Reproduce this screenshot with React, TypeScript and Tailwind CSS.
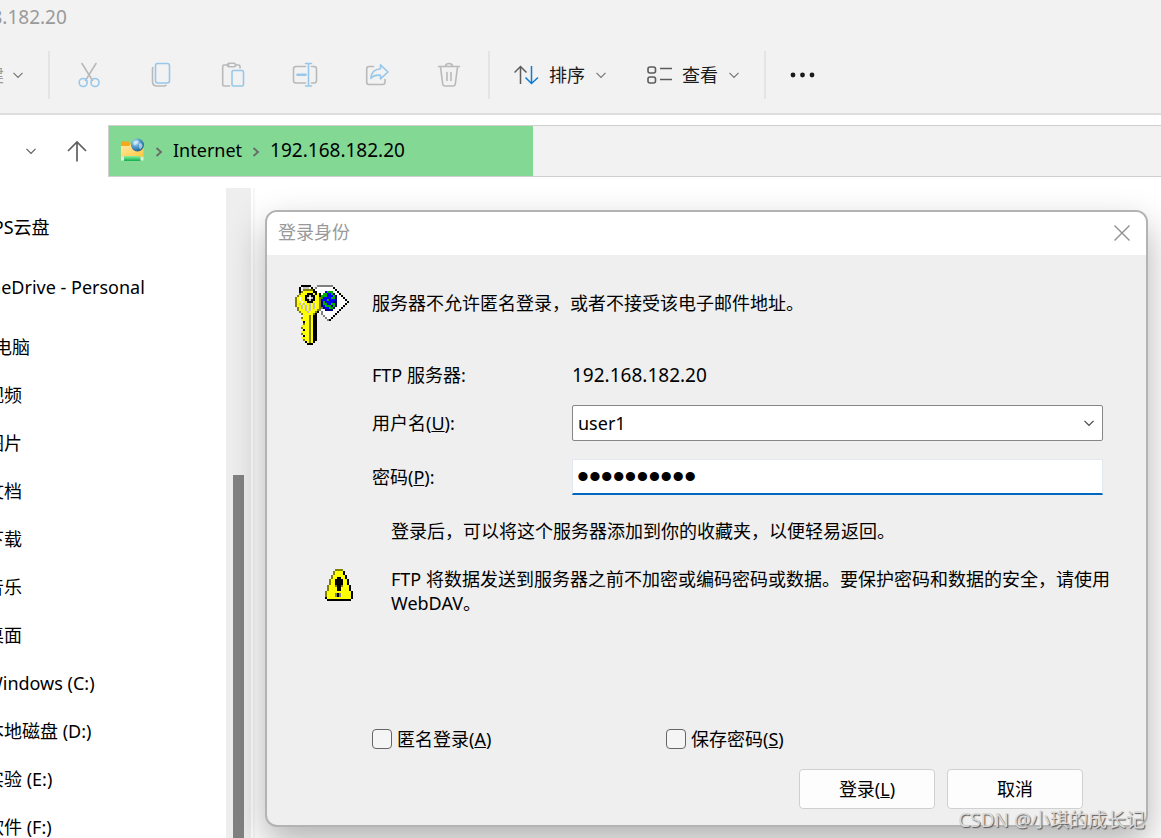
import { useState, type ReactNode } from "react";

const KEY_ROWS = [
  "...KKKKK...GGGGGGGG........",
  "..KWSSSWK.GWWWWWWWWK.......",
  "..K.OOOOOKWWWWWWWWWWK......",
  "..KOYYYYYKKWWWWBgggWWK.....",
  "..OYYYKKKYKYKWggBBgNWWK....",
  ".OYYYKKSKKYYKgggBBBgNWWK...",
  "OYWYYKSWSKYYOgBBBBggNWWWK..",
  "OYWYYKKSKKYYOBBBgBBBNWWWWK.",
  "OYYWYYKKKYYYONgBBBBNNWWWWWK",
  "OYSYSYYSYSYYONggBBggNWWWWK.",
  "OYYSYSYSYSYYONBgggNgNWWWK..",
  ".OYSYSYSYSYYOGNBBggNWWWK...",
  ".OYYYSYSYYYOGWWNNNNWWWK....",
  "..OYYYSYYYOKWGWWWWWWWK.....",
  "...OYYYYYOK..GWWWWWWK......",
  "....YYYOYKK...GWWWWK.......",
  "...OYYYOYKK....GWWK........",
  "...YYYYOYKK.....GK.........",
  "....KYYOYKK................",
  "....OYYOYKK................",
  "...YYYYOYKK................",
  "...OYYYOYKK................",
  "....KYYOYKK................",
  "...YYYYOYKK................",
  "...OYYYOYKK................",
  "....KYYOYKK................",
  "...YYYYOYKK................",
  "....OYYOYKK................",
  ".....KYOYK.................",
  "......KKK..................",
];

const WARNING_ROWS = [
  ".....OOOO.....",
  "....OYYYYK....",
  "....OYYYYK....",
  "...OYYYYYYK...",
  "...OYYKKYYK...",
  "..OYYKKKKYYK..",
  "..OYYKKKKYYK..",
  "..OYYKKKKYYK..",
  ".OYYYOKKOYYYK.",
  ".OYYYYKKYYYYK.",
  ".OYYYYKKYYYYK.",
  "OYYYYYYYYYYYYK",
  "OYYYYGKGYYYYYK",
  "OYYYYGKGYYYYYK",
  "KYYYYYYYYYYYYK",
  ".KKKKKKKKKKKK.",
];

const PALETTE: Record<string, string> = {
  K: "#000000",
  W: "#ffffff",
  G: "#808080",
  S: "#c0c0c0",
  Y: "#ffff00",
  O: "#808000",
  B: "#0000ff",
  N: "#000080",
  g: "#00b000",
};

function PixelIcon({ rows, label, className }: { rows: string[]; label: string; className: string }) {
  return (
    <svg
      role="img"
      aria-label={label}
      viewBox={`0 0 ${rows[0].length} ${rows.length}`}
      shapeRendering="crispEdges"
      className={className}
    >
      {rows.flatMap((row, y) =>
        row.split("").map((c, x) =>
          c === "." ? null : <rect key={`${x}-${y}`} x={x} y={y} width="1" height="1" fill={PALETTE[c]} />
        )
      )}
    </svg>
  );
}

const GRAY = "#b9b9b9";
const BLUE = "#97c7ea";

function ToolIcon({ children }: { children: ReactNode }) {
  return (
    <svg viewBox="0 0 28 28" className="size-7" fill="none" strokeWidth="1.6" strokeLinecap="round" strokeLinejoin="round">
      {children}
    </svg>
  );
}

const tools: { name: string; icon: ReactNode }[] = [
  {
    name: "剪切",
    icon: (
      <ToolIcon>
        <path d="M7 2.5 17.5 19.5M21 2.5 10.500 19.500" stroke={GRAY} />
        <circle cx="8.200" cy="21.500" r="4" stroke={BLUE} />
        <circle cx="20" cy="21.500" r="4" stroke={BLUE} />
      </ToolIcon>
    ),
  },
  {
    name: "复制",
    icon: (
      <ToolIcon>
        <path d="M6 6.500Q5.500 7 5.500 8V20.500Q5.500 25 10 25H17Q18.500 25 19 24.300" stroke={GRAY} />
        <rect x="8.500" y="2.500" width="14" height="19.500" rx="2.200" stroke={BLUE} />
      </ToolIcon>
    ),
  },
  {
    name: "粘贴",
    icon: (
      <ToolIcon>
        <path d="M10 4H5Q3.700 4 3.700 5.500V23.500Q3.700 25 5 25H10.500M17 4H19.500Q21 4 21 5.500V7" stroke={GRAY} />
        <rect x="8.500" y="2.300" width="8" height="3.400" rx="1.700" stroke={GRAY} />
        <rect x="13" y="9.500" width="11.500" height="15.500" rx="1.500" stroke={BLUE} />
      </ToolIcon>
    ),
  },
  {
    name: "重命名",
    icon: (
      <ToolIcon>
        <path d="M14.500 5.500H5Q2.500 5.500 2.500 8V19.500Q2.500 22 5 22H14.500M20.500 5.500H23Q25.500 5.500 25.500 8V19.500Q25.500 22 23 22H20.500" stroke={GRAY} />
        <path d="M17.500 2.500V25M14.500 2.500H20.500M14.500 25H20.500" stroke={BLUE} />
        <path d="M6.500 13.700H14.500" stroke={BLUE} strokeWidth="2.600" />
      </ToolIcon>
    ),
  },
  {
    name: "共享",
    icon: (
      <ToolIcon>
        <path d="M10.500 5.500H6Q3.700 5.500 3.700 8V21Q3.700 23.500 6 23.500H19.500Q22 23.500 22 21V18.500" stroke={GRAY} />
        <path d="M17.500 3.800 25 11 17.500 17.800V14.200Q11 13.500 7.800 17.300Q8.500 8.500 17.500 7.800Z" stroke={BLUE} />
      </ToolIcon>
    ),
  },
  {
    name: "删除",
    icon: (
      <ToolIcon>
        <path d="M3.500 5.500H24.500M10.500 5Q11 2.500 14 2.500T17.500 5M5.500 6 7.700 23Q8 25 10 25H18Q20 25 20.300 23L22.500 6M12 11.500V19.500M16 11.500V19.500" stroke={GRAY} />
      </ToolIcon>
    ),
  },
];

function Chevron({ className }: { className: string }) {
  return (
    <svg viewBox="0 0 12 12" className={className} fill="none" stroke="currentColor" strokeWidth="1.200">
      <path d="m1.500 3.800 4.500 4.500 4.500-4.500" />
    </svg>
  );
}

function Crumb() {
  return (
    <svg viewBox="0 0 8 12" className="mt-1 h-3 w-2 text-[#6a6a6a]" fill="none" stroke="currentColor" strokeWidth="1.800">
      <path d="m1.500 2 4.500 4-4.500 4" />
    </svg>
  );
}

function Divider() {
  return <span className="h-12 w-0.5 shrink-0 bg-[#e4e4e4]" />;
}

function FtpFolder() {
  return (
    <svg viewBox="0 0 24 26" className="h-[26px] w-6">
      <defs>
        <linearGradient id="folder" x1="0" y1="0" x2="1" y2="1">
          <stop offset="0" stopColor="#ffe9a6" />
          <stop offset="1" stopColor="#ffc83a" />
        </linearGradient>
        <radialGradient id="globe" cx="0.350" cy="0.300" r="0.800">
          <stop offset="0" stopColor="#c2e4f6" />
          <stop offset="0.500" stopColor="#4a96c8" />
          <stop offset="1" stopColor="#17557f" />
        </radialGradient>
        <linearGradient id="pipe" x1="0" y1="0" x2="0" y2="1">
          <stop offset="0" stopColor="#8cf0a0" />
          <stop offset="1" stopColor="#0fb04a" />
        </linearGradient>
      </defs>
      <path d="M0 5.500Q0 4.500 1 4.500H7.500L9.500 6.500V10H0Z" fill="#f8a81c" />
      <path d="M0 9H8L10 7H22.500V21H0Z" fill="url(#folder)" />
      <rect x="0" y="20" width="22.500" height="3.500" fill="#d9efdc" />
      <rect x="3" y="19" width="16.500" height="5" fill="url(#pipe)" />
      <circle cx="16.500" cy="8" r="6.500" fill="url(#globe)" />
      <path d="M12.500 5Q15 2.500 17 4T14.500 8Q12 8.500 12.500 5ZM18.500 6Q21 6 21.500 8T19 12.500Q17 9 18.500 6Z" fill="#e2f2f8" opacity="0.600" />
    </svg>
  );
}

const roots = ["WPS云盘", "OneDrive - Personal", "此电脑"];
const folders = [
  "视频",
  "图片",
  "文档",
  "下载",
  "音乐",
  "桌面",
  "Windows (C:)",
  "本地磁盘 (D:)",
  "实验 (E:)",
  "软件 (F:)",
];

function Toolbar() {
  return (
    <header className="shrink-0 border-b-2 border-[#dedede] bg-[#f2f2f2]">
      <h1 className="-ml-[68px] h-[37px] text-[19px] leading-[34px] text-[#9a9a9a]">192.168.182.20</h1>
      <div className="flex h-[76px] items-center">
        <button className="-ml-8 mr-6 flex shrink-0 items-center gap-2 text-[#9a9a9a]">
          新建
          <Chevron className="size-3 text-[#777777]" />
        </button>
        <Divider />
        <div className="mx-[3px] flex">
          {tools.map((tool) => (
            <button key={tool.name} aria-label={tool.name} className="flex w-[72px] justify-center">
              {tool.icon}
            </button>
          ))}
        </div>
        <Divider />
        <button className="ml-6 flex shrink-0 items-center gap-2.5 text-[#1a1a1a]">
          <svg viewBox="0 0 25 20" className="h-5 w-[25px]" fill="none" strokeWidth="1.500">
            <path d="M6.500 19V1.500M0.500 7.500 6.500 1.500 12.500 7.500" stroke="#5c5c5c" />
            <path d="M17.500 1V18.500M11.500 12.500 17.500 18.500 24 12.500" stroke="#0f7bd4" />
          </svg>
          排序
          <Chevron className="size-3 text-[#777777]" />
        </button>
        <button className="ml-10 mr-6 flex shrink-0 items-center gap-2.5 text-[#1a1a1a]">
          <svg viewBox="0 0 25 20" className="h-5 w-[25px]" fill="none" stroke="#5c5c5c" strokeWidth="1.600">
            <rect x="1" y="2" width="7.500" height="6" rx="2" />
            <rect x="1" y="12" width="7.500" height="6" rx="2" />
            <path d="M13 3.500H25M13 14.500H25" />
          </svg>
          查看
          <Chevron className="size-3 text-[#777777]" />
        </button>
        <Divider />
        <button aria-label="更多" className="ml-6">
          <svg viewBox="0 0 26 6" className="h-1.5 w-[26px]" fill="#1a1a1a">
            <circle cx="3" cy="3" r="2.400" />
            <circle cx="12.500" cy="3" r="2.400" />
            <circle cx="22" cy="3" r="2.400" />
          </svg>
        </button>
      </div>
    </header>
  );
}

function AddressBar() {
  return (
    <nav className="flex shrink-0 pt-2.5 pb-[11px]">
      <div className="flex w-[108px] shrink-0 items-center justify-end gap-[30px] pr-[21px]">
        <button aria-label="最近的位置">
          <Chevron className="size-3 text-[#5f5f5f]" />
        </button>
        <button aria-label="向上">
          <svg viewBox="0 0 20 22" className="h-[22px] w-5" fill="none" stroke="#5f5f5f" strokeWidth="1.700">
            <path d="M10 21.500V2M1 11 10 2 19 11" />
          </svg>
        </button>
      </div>
      <div className="flex h-[52px] flex-1 border border-r-0 border-[#cfcfcf] bg-[#f2f2f2]">
        <div className="flex w-[424px] items-center gap-2.5 bg-[#83d893] pb-0.5 pl-3 text-black">
          <FtpFolder />
          <Crumb />
          <a href="#internet">Internet</a>
          <Crumb />
          <a href="#server" className="text-[19px]">
            192.168.182.20
          </a>
        </div>
      </div>
    </nav>
  );
}

function Sidebar() {
  return (
    <aside className="flex w-[255px] shrink-0 overflow-hidden text-black">
      <div className="w-[226px] shrink-0 pt-[15px]">
        <ul className="-ml-6 flex flex-col gap-3">
          {roots.map((name) => (
            <li key={name} className="h-12 leading-[48px] whitespace-nowrap">
              {name}
            </li>
          ))}
        </ul>
        <ul className="-ml-3.5">
          {folders.map((name) => (
            <li key={name} className="h-12 leading-[48px] whitespace-nowrap">
              {name}
            </li>
          ))}
        </ul>
      </div>
      <div className="w-[25px] shrink-0 bg-[#eeeeee] px-[7px] pt-[287px]">
        <div className="h-full bg-[#828282]" />
      </div>
      <div className="w-1 border-r-2 border-[#f6f6f6] bg-white" />
    </aside>
  );
}

function LoginDialog() {
  const [password, setPassword] = useState("0123456789");
  return (
    <section
      role="dialog"
      aria-labelledby="dialog-title"
      className="relative z-10 flex flex-1 flex-col overflow-hidden rounded-xl border-2 border-[#b3b3b3] bg-[#efefef] text-black shadow-[0_16px_36px_rgba(0,0,0,0.3)]"
    >
      <div className="flex h-[43px] shrink-0 items-center justify-between bg-white pr-4 pb-0.5 pl-[11px]">
        <h2 id="dialog-title" className="text-[#999999]">
          登录身份
        </h2>
        <button aria-label="关闭">
          <svg viewBox="0 0 16 16" className="size-4" fill="none" stroke="#8f8f8f" strokeWidth="1.400">
            <path d="m0.500 0.500 15 15M15.500 0.500 0.500 15.500" />
          </svg>
        </button>
      </div>
      <form className="flex flex-1 flex-col" onSubmit={(e) => e.preventDefault()}>
        <div className="flex gap-[23px] pt-[30px] pl-7">
          <PixelIcon rows={KEY_ROWS} label="登录" className="h-[60px] w-[54px]" />
          <p className="leading-9">服务器不允许匿名登录，或者不接受该电子邮件地址。</p>
        </div>
        <div className="pr-[43px] pl-[105px]">
          <div className="mt-3 flex h-9 items-center">
            <span className="w-[200px] shrink-0">FTP 服务器:</span>
            <span className="text-[19px]">192.168.182.20</span>
          </div>
          <div className="mt-3 flex h-9 items-center">
            <label htmlFor="user" className="w-[200px] shrink-0">
              用户名(<u>U</u>):
            </label>
            <div className="relative flex-1">
              <select
                id="user"
                defaultValue="user1"
                className="block h-9 w-full appearance-none rounded-xs border border-[#868686] bg-white px-[5px]"
              >
                <option>user1</option>
              </select>
              <Chevron className="pointer-events-none absolute top-3 right-2 size-3 text-[#444444]" />
            </div>
          </div>
          <div className="mt-[18px] flex h-9 items-center">
            <label htmlFor="password" className="w-[200px] shrink-0">
              密码(<u>P</u>):
            </label>
            <input
              id="password"
              type="password"
              value={password}
              onChange={(e) => setPassword(e.target.value)}
              className="h-9 min-w-0 flex-1 border border-b-2 border-[#e3e8ee] border-b-[#0067c0] bg-white px-1 font-['Liberation_Sans',sans-serif] text-[34px] leading-8 outline-none"
            />
          </div>
        </div>
        <p className="mt-6 pl-[124px] leading-6">登录后，可以将这个服务器添加到你的收藏夹，以便轻易返回。</p>
        <div className="mt-6 flex gap-[38px] pr-4 pl-[58px]">
          <PixelIcon rows={WARNING_ROWS} label="警告" className="mt-0.5 h-8 w-7 shrink-0" />
          <p className="leading-6">
            FTP 将数据发送到服务器之前不加密或编码密码或数据。要保护密码和数据的安全，请使用 WebDAV。
          </p>
        </div>
        <div className="mt-auto flex pl-[105px]">
          <label className="flex h-6 w-[294px] items-center gap-[5px]">
            <input type="checkbox" className="size-5 appearance-none rounded border border-[#666666] bg-[#f5f5f5]" />
            <span>
              匿名登录(<u>A</u>)
            </span>
          </label>
          <label className="flex h-6 items-center gap-[5px]">
            <input type="checkbox" className="size-5 appearance-none rounded border border-[#666666] bg-[#f5f5f5]" />
            <span>
              保存密码(<u>S</u>)
            </span>
          </label>
        </div>
        <div className="mt-[18px] mb-4 flex justify-end gap-3 pr-[63px]">
          <button type="submit" className="h-10 w-[136px] rounded border border-[#d0d0d0] bg-[#fdfdfd]">
            登录(<u>L</u>)
          </button>
          <button type="button" className="h-10 w-[136px] rounded border border-[#d0d0d0] bg-[#fdfdfd]">
            取消
          </button>
        </div>
      </form>
    </section>
  );
}

export default function App() {
  return (
    <div className="relative flex h-screen flex-col overflow-hidden bg-white font-['Noto_Sans','Noto_Sans_CJK_SC',sans-serif] text-[18px]">
      <Toolbar />
      <AddressBar />
      <div className="flex min-h-0 flex-1">
        <Sidebar />
        <main className="flex min-w-0 flex-1 pt-[22px] pr-[13px] pb-[11px] pl-2.5">
          <LoginDialog />
        </main>
      </div>
      <p className="pointer-events-none absolute right-4 bottom-1 z-20 text-[19px] leading-7 whitespace-nowrap text-[#d8d8d8] [text-shadow:1px_1px_1px_#555555]">
        CSDN @小琪的成长记
      </p>
    </div>
  );
}
